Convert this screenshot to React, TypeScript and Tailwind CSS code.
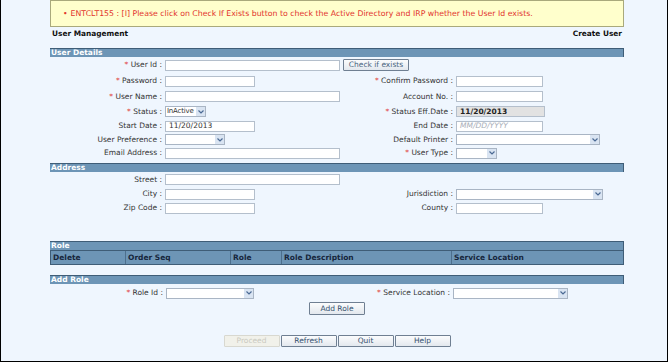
import React from "react";

const Req = () => <span className="text-[#e0403a]">* </span>;

function Input({ w, value, bg, bold, placeholder }: { w: number; value?: string; bg?: string; bold?: boolean; placeholder?: string }) {
  return (
    <div
      className={`h-[11px] border border-[#b4bfcc] flex items-center pl-[3px] leading-none ${bg ?? "bg-white"} ${bold ? "font-bold text-[7.5px] text-[#222]" : "text-[#333]"}`}
      style={{ width: w }}
    >
      {value}
      {placeholder && <span className="italic text-[#a8aeb8]">{placeholder}</span>}
    </div>
  );
}

function Select({ w, value }: { w: number; value?: string }) {
  return (
    <div className="h-[11px] border border-[#a9b5c4] bg-white flex items-center justify-between leading-none" style={{ width: w }}>
      <span className="pl-[1px] text-[#333] text-[7px] tracking-[-0.2px]">{value}</span>
      <span className="w-[9px] h-[9px] bg-[#d9e4f2] flex items-center justify-center">
        <svg width="6" height="4" viewBox="0 0 6 4">
          <path d="M0.5 0.5 L3 3 L5.5 0.5" fill="none" stroke="#4b6a94" strokeWidth="1.2" />
        </svg>
      </span>
    </div>
  );
}

function Label({ children }: { children: React.ReactNode }) {
  return <div className="text-right text-[#333] whitespace-nowrap">{children}</div>;
}

function Bar({ title, mt }: { title: string; mt: string }) {
  return (
    <div className={`${mt} h-[9px] bg-[#6d95b6] border-t border-r border-[#3f5d77] flex items-center pl-[1px] text-white font-bold leading-none`}>
      {title}
    </div>
  );
}

function Row({ h, children }: { h: string; children: React.ReactNode }) {
  return <div className={`${h} grid grid-cols-[112px_175px_110px_1fr] gap-x-[3px] items-center`}>{children}</div>;
}

function Btn({ label, disabled, w = "w-[56px]" }: { label: string; disabled?: boolean; w?: string }) {
  return (
    <div
      className={`${w} h-[12px] flex items-center justify-center leading-none rounded-[1px] border ${
        disabled
          ? "border-[#d8d8d0] bg-[#f1f1ea] text-[#c9c9c0]"
          : "border-[#6f7f92] bg-gradient-to-b from-[#fbfcfd] to-[#e3e8ee] text-[#34506e]"
      }`}
    >
      {label}
    </div>
  );
}

export default function App() {
  return (
    <div
      className="w-[668px] h-[362px] overflow-hidden bg-[#eff6fe] border-l border-r border-b border-black text-[7.5px]"
      style={{ fontFamily: '"DejaVu Sans", Verdana, sans-serif' }}
    >
      <div className="ml-[49px] w-[574px]">
        {/* message */}
        <div className="h-[27px] bg-[#ffffcc] border border-[#a9a97c] flex items-center pl-[12px] text-[#e2342c] text-[7.8px] whitespace-nowrap">
          <span className="mr-[3px]">•</span>
          ENTCLT155 : [I] Please click on Check If Exists button to check the Active Directory and IRP whether the User Id exists.
        </div>
        <div className="mt-[1px] h-[11px] flex items-center justify-between font-bold text-[7.4px] text-[#111] pl-[2px] pr-[2px]">
          <span>User Management</span>
          <span>Create User</span>
        </div>

        {/* User Details */}
        <Bar title="User Details" mt="mt-[9px]" />
        <Row h="h-[16px]">
          <Label><Req />User Id :</Label>
          <Input w={175} />
          <div className="w-[66px] h-[12px] border border-[#6f7f92] rounded-[1px] bg-gradient-to-b from-[#fbfcfd] to-[#e3e8ee] flex items-center justify-center text-[#4a6580] leading-none">
            Check if exists
          </div>
          <div />
        </Row>
        <Row h="h-[16px]">
          <Label><Req />Password :</Label>
          <Input w={90} />
          <Label><Req />Confirm Password :</Label>
          <Input w={87} />
        </Row>
        <Row h="h-[15px]">
          <Label><Req />User Name :</Label>
          <Input w={175} />
          <Label>Account No. :</Label>
          <Input w={87} />
        </Row>
        <Row h="h-[15px]">
          <Label><Req />Status :</Label>
          <Select w={41} value="InActive" />
          <Label><Req />Status Eff.Date :</Label>
          <Input w={89} value="11/20/2013" bg="bg-[#e2e2e2]" bold />
        </Row>
        <Row h="h-[14px]">
          <Label>Start Date :</Label>
          <Input w={90} value="11/20/2013" />
          <Label>End Date :</Label>
          <Input w={87} placeholder="MM/DD/YYYY" />
        </Row>
        <Row h="h-[13px]">
          <Label>User Preference :</Label>
          <Select w={60} />
          <Label>Default Printer :</Label>
          <Select w={144} />
        </Row>
        <Row h="h-[14px]">
          <Label>Email Address :</Label>
          <Input w={175} />
          <Label><Req />User Type :</Label>
          <Select w={41} />
        </Row>

        {/* Address */}
        <Bar title="Address" mt="mt-[3px]" />
        <Row h="h-[15px]">
          <Label>Street :</Label>
          <Input w={175} />
          <div />
          <div />
        </Row>
        <Row h="h-[14px]">
          <Label>City :</Label>
          <Input w={90} />
          <Label>Jurisdiction :</Label>
          <Select w={147} />
        </Row>
        <Row h="h-[14px]">
          <Label>Zip Code :</Label>
          <Input w={90} />
          <Label>County :</Label>
          <Input w={87} />
        </Row>

        {/* Role */}
        <Bar title="Role" mt="mt-[26px]" />
        <div className="h-[15px] grid grid-cols-[74px_105px_51px_170px_1fr] bg-[#6d95b6] border border-[#3f5d77] font-bold text-[#16263c] leading-none">
          {["Delete", "Order Seq", "Role", "Role Description", "Service Location"].map((c, i) => (
            <div key={c} className={`flex items-center pl-[2px] ${i > 0 ? "border-l border-[#4d6f8d]" : ""}`}>
              {c}
            </div>
          ))}
        </div>

        {/* Add Role */}
        <Bar title="Add Role" mt="mt-[10px]" />
        <div className="mt-[2px] h-[14px] grid grid-cols-[113px_175px_106px_1fr] gap-x-[3px] items-center">
          <Label><Req />Role Id :</Label>
          <Select w={88} />
          <Label><Req />Service Location :</Label>
          <Select w={115} />
        </div>
        <div className="mt-[2px] flex justify-center">
          <Btn label="Add Role" w="w-[56px] h-[13px]" />
        </div>

        <div className="mt-[20px] flex justify-center gap-[1px]">
          <Btn label="Proceed" disabled />
          <Btn label="Refresh" />
          <Btn label="Quit" />
          <Btn label="Help" />
        </div>
      </div>
    </div>
  );
}
